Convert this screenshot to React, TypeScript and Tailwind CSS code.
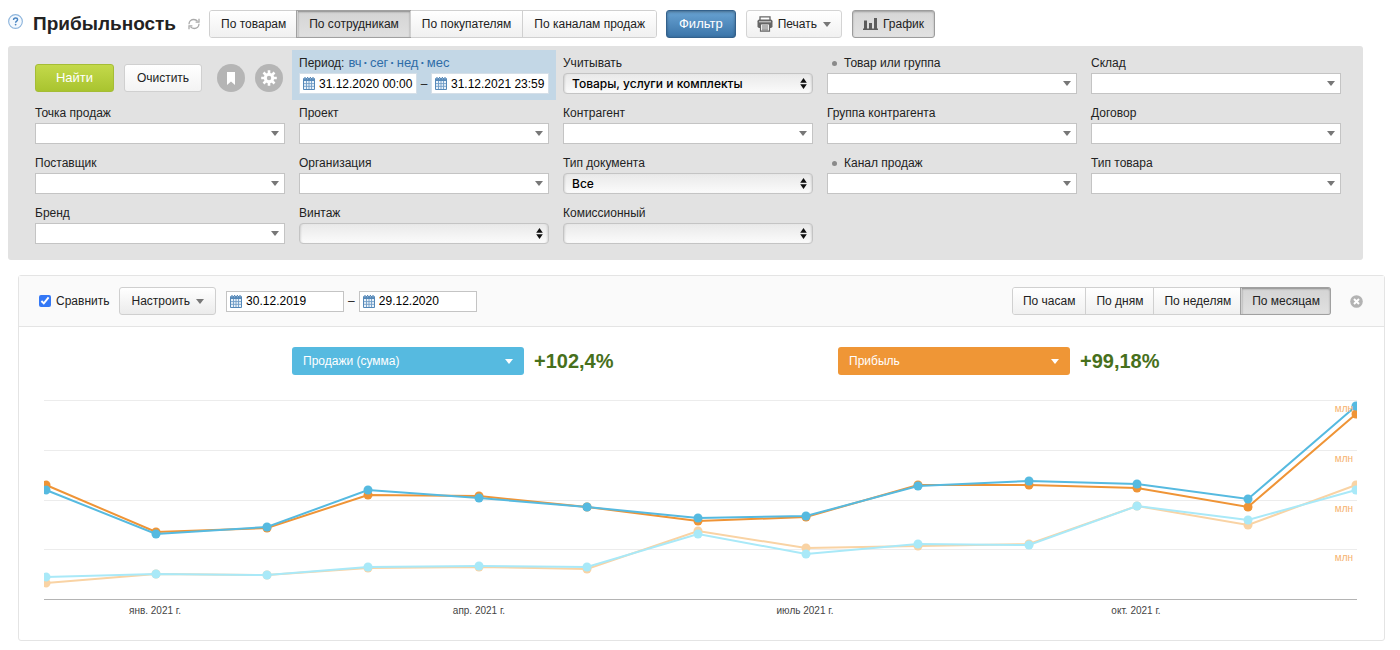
import React, { useId, useState } from 'react';
import clsx from 'clsx';

interface Field {
  label: string;
  kind?: 'combo' | 'native';
  dot?: boolean;
  value?: string;
}

const fields: Field[] = [
  { label: 'Учитывать', kind: 'native', value: 'Товары, услуги и комплекты' },
  { label: 'Товар или группа', dot: true },
  { label: 'Склад' },
  { label: 'Точка продаж' },
  { label: 'Проект' },
  { label: 'Контрагент' },
  { label: 'Группа контрагента' },
  { label: 'Договор' },
  { label: 'Поставщик' },
  { label: 'Организация' },
  { label: 'Тип документа', kind: 'native', value: 'Все' },
  { label: 'Канал продаж', dot: true },
  { label: 'Тип товара' },
  { label: 'Бренд' },
  { label: 'Винтаж', kind: 'native' },
  { label: 'Комиссионный', kind: 'native' },
];

const reportTabs = ['По товарам', 'По сотрудникам', 'По покупателям', 'По каналам продаж'];
const stepTabs = ['По часам', 'По дням', 'По неделям', 'По месяцам'];

// Chart coordinates, one x per month
const xs = [2, 112, 223, 324, 435, 543, 654, 762, 874, 985, 1093, 1204, 1312];
const series = [
  { name: 'profitPrev', color: '#f9d3a4', ys: [188, 179, 180, 173, 172, 174, 136, 153, 151, 149, 111, 130, 90] },
  { name: 'salesPrev', color: '#a9e9f8', ys: [182, 179, 180, 172, 171, 172, 139, 159, 149, 150, 111, 125, 95] },
  { name: 'profit', color: '#ef9436', ys: [90, 137, 133, 100, 101, 112, 126, 122, 90, 90, 93, 112, 19] },
  { name: 'sales', color: '#56bae0', ys: [95, 139, 132, 95, 103, 112, 123, 121, 91, 86, 89, 104, 11] },
];
const gridLines = [5, 55, 105, 154];
const months = [
  { x: 111, text: 'янв. 2021 г.' },
  { x: 435, text: 'апр. 2021 г.' },
  { x: 761, text: 'июль 2021 г.' },
  { x: 1092, text: 'окт. 2021 г.' },
];

const periods = [
  { text: 'вч', href: '#yesterday' },
  { text: 'сег', href: '#today' },
  { text: 'нед', href: '#week' },
  { text: 'мес', href: '#month' },
];

function Caret({ className }: { className?: string }) {
  return (
    <svg viewBox="0 0 8 5" className={clsx('w-2 h-[5px] shrink-0', className)} fill="currentColor" aria-hidden="true">
      <path d="M0 0h8L4 5z" />
    </svg>
  );
}

function CalendarIcon() {
  return (
    <svg viewBox="0 0 12 13" className="w-3 h-[13px] shrink-0" aria-hidden="true">
      <rect x="0" y="1" width="12" height="12" rx="1" fill="#5588b8" />
      <path d="M2 0v2M4.600 0v2M7.400 0v2M10 0v2" stroke="#5588b8" strokeWidth="1.200" />
      <path d="M1.500 1.800h1M4.100 1.800h1M6.900 1.800h1M9.500 1.800h1" stroke="#fff" strokeWidth="0.500" />
      <rect x="1" y="4" width="10" height="8" fill="#eaf2f9" />
      <path d="M1 6.600h10M1 9.300h10M3.500 4v8M6 4v8M8.500 4v8" stroke="#6f9cc6" strokeWidth="0.900" />
    </svg>
  );
}

interface ButtonGroupProps {
  items: string[];
  initial: string;
  label: string;
  compact?: boolean;
}

function ButtonGroup({ items, initial, label, compact }: ButtonGroupProps) {
  const [active, setActive] = useState(initial);
  return (
    <div className="flex h-7 rounded-[3px] border border-[#d0d0d0] shrink-0" role="group" aria-label={label}>
      {items.map((item) => (
        <button
          key={item}
          type="button"
          aria-pressed={item === active}
          onClick={() => setActive(item)}
          className={clsx(
            'border-l border-[#d0d0d0] first:border-l-0 first:rounded-l-[2px] last:rounded-r-[2px] whitespace-nowrap',
            compact ? 'px-[10px]' : 'px-[11px]',
            item === active
              ? 'bg-linear-to-b from-[#d4d4d4] to-[#e0e0e0] shadow-[inset_0_1px_2px_rgba(0,0,0,0.35),0_0_0_1px_#a0a0a0]'
              : 'bg-linear-to-b from-white to-[#f0f0f0]'
          )}
        >
          {item}
        </button>
      ))}
    </div>
  );
}

function DateInput({ value, label, bordered }: { value: string; label: string; bordered?: boolean }) {
  return (
    <label
      className={clsx(
        'flex items-center gap-1 w-[118px] h-[21px] bg-white border pl-[3px]',
        bordered ? 'border-[#c4c4c4]' : 'border-[#d5dfe8]'
      )}
    >
      <CalendarIcon />
      <input
        type="text"
        aria-label={label}
        defaultValue={value}
        className="w-full min-w-0 bg-transparent text-xs text-black outline-none"
      />
    </label>
  );
}

function FilterField({ field }: { field: Field }) {
  const id = useId();
  const native = field.kind === 'native';
  return (
    <div>
      <label htmlFor={id} className="flex items-center leading-[18px] mb-px">
        {field.dot && <span className="w-[5px] h-[5px] ml-[5px] mr-[7px] rounded-full bg-[#8a8a8a]"></span>}
        {field.label}
      </label>
      <div className="relative">
        <select
          id={id}
          className={clsx(
            'block w-full h-[21px] appearance-none border outline-none text-black',
            native
              ? 'rounded-[4px] border-[#c4c4c4] bg-linear-to-b from-[#e9e9e9] to-[#fbfbfb] pl-2 pr-5 font-[Inter,sans-serif] text-xs font-medium shadow-[inset_2px_0_2px_-1px_rgba(0,0,0,0.12),inset_-2px_0_2px_-1px_rgba(0,0,0,0.12)]'
              : 'border-[#c4c4c4] bg-white px-2'
          )}
        >
          <option>{field.value ?? ''}</option>
        </select>
        {native ? (
          <svg viewBox="0 0 6 10" className="absolute right-[6px] top-[5px] w-[7px] h-[11px] pointer-events-none" aria-hidden="true">
            <path d="M3 0l3 4.300H0zM3 10l3-4.300H0z" fill="#111" />
          </svg>
        ) : (
          <Caret className="absolute right-[6px] top-2 text-[#777] pointer-events-none" />
        )}
      </div>
    </div>
  );
}

function MetricSelect({ label, change, color }: { label: string; change: string; color: string }) {
  return (
    <div className="w-1/2 flex items-center gap-[10px]">
      <button
        type="button"
        className={clsx('flex items-center justify-between w-[232px] h-7 rounded-[3px] px-[11px] text-white', color)}
      >
        {label}
        <Caret />
      </button>
      <span className="text-xl font-bold text-[#47701c]">{change}</span>
    </div>
  );
}

function ProfitChart() {
  return (
    <svg viewBox="0 0 1313 225" className="block w-full h-auto" role="img" aria-label="График прибыльности">
      {gridLines.map((y) => (
        <line key={y} x1="0" x2="1313" y1={y + 0.5} y2={y + 0.5} stroke="#ececec" />
      ))}
      <line x1="0" x2="1313" y1="204.500" y2="204.500" stroke="#b4b4b4" />
      {series.map((s) => (
        <g key={s.name}>
          <polyline points={xs.map((x, i) => `${x},${s.ys[i]}`).join(' ')} fill="none" stroke={s.color} strokeWidth="2" />
          {xs.map((x, i) => (
            <circle key={x} cx={x} cy={s.ys[i]} r="4.500" fill={s.color} />
          ))}
        </g>
      ))}
      {gridLines.map((y) => (
        <text key={y} x="1309" y={y + 12} textAnchor="end" fontSize="10" fill="#f6b26e">
          млн
        </text>
      ))}
      {months.map((m) => (
        <text key={m.text} x={m.x} y="219" textAnchor="middle" fontSize="10" fill="#444">
          {m.text}
        </text>
      ))}
    </svg>
  );
}

export default function App() {
  const [compare, setCompare] = useState(true);

  return (
    <div className="min-h-screen bg-white font-['Liberation_Sans',Arial,sans-serif] text-xs leading-4 text-[#222] pt-[10px] pb-[9px]">
      {/* Page header */}
      <header className="flex items-center h-7 pl-2">
        <button type="button" aria-label="Помощь" className="shrink-0 mr-[10px] self-start pt-1">
          <svg viewBox="0 0 16 16" className="w-[15px] h-[15px]">
            <circle cx="8" cy="8" r="7.300" fill="#f4f9fe" stroke="#8cb4dc" strokeWidth="1.200" />
            <path d="M5.900 6.300c0-1.300 1-2.100 2.200-2.100s2.100.800 2.100 1.900c0 1.500-2.100 1.600-2.100 3.200" fill="none" stroke="#4a85c2" strokeWidth="1.500" />
            <circle cx="8.100" cy="11.300" r="0.950" fill="#4a85c2" />
          </svg>
        </button>
        <h1 className="text-[19px] font-bold">Прибыльность</h1>
        <button type="button" aria-label="Обновить" className="ml-3 mr-[9px] shrink-0">
          <svg viewBox="0 0 12 12" className="w-3 h-3" fill="none" stroke="#aaa" strokeWidth="1.300">
            <path d="M1 6.200C1 3.400 3.200 1.500 5.800 1.500c1.600 0 2.900.700 3.800 1.900M11 5.800c0 2.800-2.200 4.700-4.800 4.700-1.600 0-2.900-.700-3.800-1.900" />
            <path d="M11 .800v3.400H7.600M1 11.200V7.800h3.400" />
          </svg>
        </button>
        <ButtonGroup items={reportTabs} initial="По сотрудникам" label="Разрез отчёта" />
        <button
          type="button"
          className="ml-[9px] h-7 px-3 rounded-[3px] border border-[#33618c] bg-linear-to-b from-[#69a3d3] to-[#3b75a9] text-[13px] text-white shadow-[inset_0_1px_3px_rgba(0,0,0,0.35)]"
        >
          Фильтр
        </button>
        <button
          type="button"
          className="ml-[10px] h-7 px-[10px] flex items-center rounded-[3px] border border-[#d4d4d4] bg-linear-to-b from-white to-[#f1f1f1]"
        >
          <svg viewBox="0 0 16 16" className="w-4 h-4 mr-[5px]" aria-hidden="true">
            <path d="M3 4V.800h10V4" fill="#fff" stroke="#666" strokeWidth="1.300" />
            <rect x="0.500" y="3.500" width="15" height="8.500" rx="1.800" fill="#666" />
            <path d="M2 5.800h12" stroke="#ddd" strokeWidth="1" />
            <path d="M3.500 8h9v7.200h-9z" fill="#fff" stroke="#666" strokeWidth="1.200" />
            <path d="M5 10h6M5 12h6M5 13.900h6" stroke="#666" strokeWidth="1" />
          </svg>
          Печать
          <Caret className="ml-[6px] text-[#777]" />
        </button>
        <button
          type="button"
          aria-pressed="true"
          className="ml-[10px] h-7 px-[10px] flex items-center rounded-[3px] border border-[#9c9c9c] bg-linear-to-b from-[#d6d6d6] to-[#e2e2e2] shadow-[inset_0_1px_2px_rgba(0,0,0,0.25)]"
        >
          <svg viewBox="0 0 15 12" className="w-[15px] h-3 mr-[5px]" fill="#5c5c5c" aria-hidden="true">
            <path d="M0 10.500h15V12H0zM1 2.500h3v8H1zM6 5h3v5.500H6zM11 0h3v10.500h-3z" />
          </svg>
          График
        </button>
      </header>

      {/* Filter panel */}
      <form className="mt-2 ml-2 mr-[37px] pt-2 pb-4 pl-[27px] pr-[22px] rounded-[3px] bg-[#e2e2e2] grid grid-cols-5 gap-x-[14px] gap-y-[10px]">
        <div className="flex items-end pb-[2px]">
          <button
            type="button"
            className="w-[79px] h-7 rounded-[3px] border border-[#a5bd35] bg-linear-to-b from-[#c3d94a] to-[#a9c42f] text-[13px] text-white"
          >
            Найти
          </button>
          <button type="reset" className="ml-[10px] w-[78px] h-7 rounded-[3px] border border-[#d0d0d0] bg-linear-to-b from-white to-[#f3f3f3]">
            Очистить
          </button>
          <button type="button" aria-label="Закладки" className="ml-[15px] w-7 h-7 rounded-full bg-[#b5b5b5] flex items-center justify-center">
            <svg viewBox="0 0 10 13" className="w-[10px] h-[13px]">
              <path d="M1 0h8v13L5 9.500 1 13z" fill="#fff" />
            </svg>
          </button>
          <button type="button" aria-label="Настройки" className="ml-[10px] w-7 h-7 rounded-full bg-[#b5b5b5] flex items-center justify-center">
            <svg viewBox="-8 -8 16 16" className="w-4 h-4">
              <path
                d="M0-7.800V7.800M-7.800 0H7.800M-5.500-5.500L5.500 5.500M5.500-5.500L-5.500 5.500"
                stroke="#fff"
                strokeWidth="2.600"
              />
              <circle r="5.200" fill="#fff" />
              <circle r="2.200" fill="#b5b5b5" />
            </svg>
          </button>
        </div>

        {/* Period */}
        <div className="-mx-[7px] -mt-1 -mb-[6px] px-[7px] pt-1 pb-[6px] bg-[#c3d7e6]">
          <div className="flex leading-[18px] mb-px whitespace-nowrap">
            <span>Период:</span>
            <span className="flex ml-1 text-[13px] text-[#2f6da8]">
              {periods.map((period, i) => (
                <span key={period.text}>
                  {i > 0 && <span className="mx-[2px] font-bold">·</span>}
                  <a href={period.href}>{period.text}</a>
                </span>
              ))}
            </span>
          </div>
          <div className="flex items-center justify-between">
            <DateInput value="31.12.2020 00:00" label="Начало периода" />
            <span>–</span>
            <DateInput value="31.12.2021 23:59" label="Конец периода" />
          </div>
        </div>

        {fields.map((field) => (
          <FilterField key={field.label} field={field} />
        ))}
      </form>

      {/* Chart panel */}
      <section className="mt-[15px] ml-[18px] mr-[15px] rounded-[3px] border border-[#e4e4e4]">
        <div className="flex items-center h-[51px] pl-5 pr-[21px] bg-[#fafafa] border-b border-[#e4e4e4]">
          <label className="flex items-center gap-[5px]">
            <input
              type="checkbox"
              checked={compare}
              onChange={(e) => setCompare(e.target.checked)}
              className="w-3 h-3 accent-[#3478f6]"
            />
            Сравнить
          </label>
          <button
            type="button"
            className="mx-[10px] h-7 px-[11px] flex items-center gap-[6px] rounded-[3px] border border-[#cfcfcf] bg-linear-to-b from-white to-[#ebebeb]"
          >
            Настроить
            <Caret className="text-[#777]" />
          </button>
          <div className="flex items-center gap-1">
            <DateInput value="30.12.2019" label="Начало сравнения" bordered />
            <span>–</span>
            <DateInput value="29.12.2020" label="Конец сравнения" bordered />
          </div>
          <div className="ml-auto flex items-center">
            <ButtonGroup items={stepTabs} initial="По месяцам" label="Шаг графика" compact />
            <button type="button" aria-label="Закрыть график" className="ml-[19px]">
              <svg viewBox="0 0 13 13" className="w-[13px] h-[13px]">
                <circle cx="6.500" cy="6.500" r="6.300" fill="#b3b3b3" />
                <path d="M4 4l5 5M9 4l-5 5" stroke="#fff" strokeWidth="2" />
              </svg>
            </button>
          </div>
        </div>

        <div className="flex pt-5 pl-[20%]">
          <MetricSelect label="Продажи (сумма)" change="+102,4%" color="bg-[#56bae0]" />
          <MetricSelect label="Прибыль" change="+99,18%" color="bg-[#ef9636]" />
        </div>

        <div className="pt-5 pb-5 pl-[25px] pr-[27px]">
          <ProfitChart />
        </div>
      </section>
    </div>
  );
}
